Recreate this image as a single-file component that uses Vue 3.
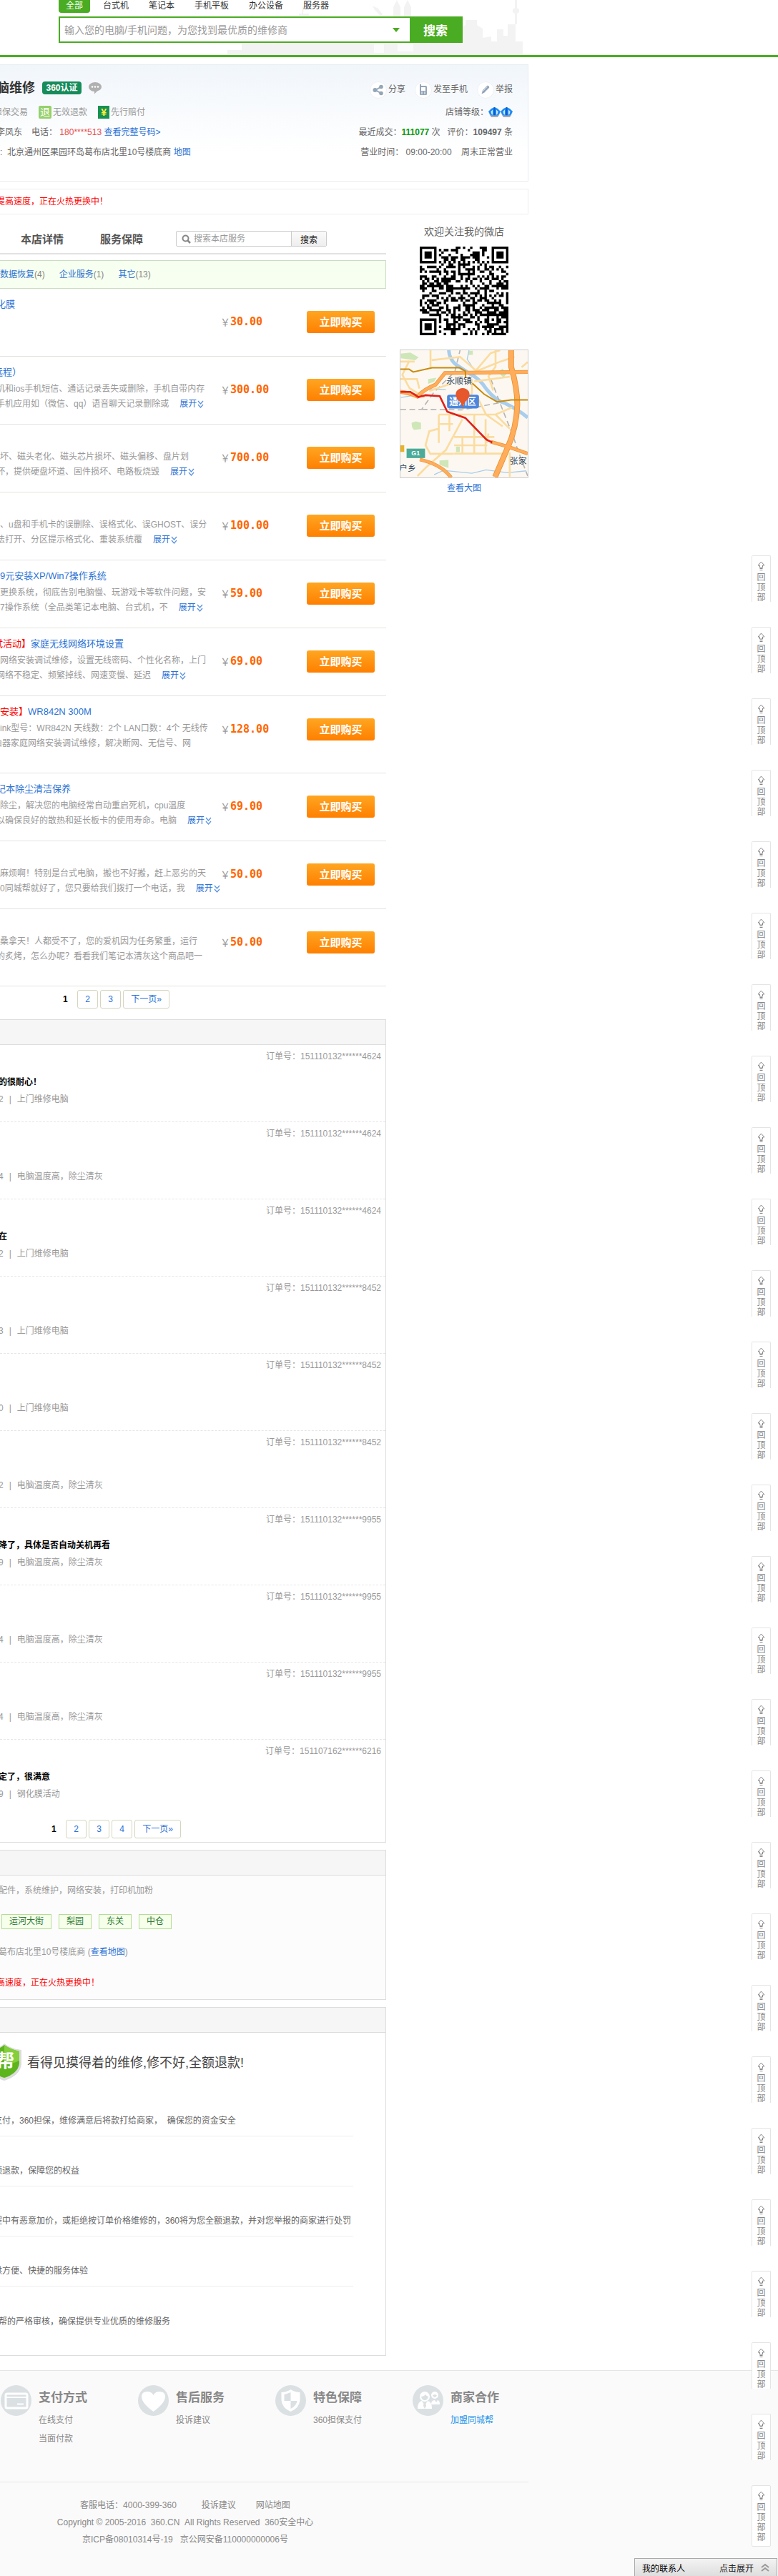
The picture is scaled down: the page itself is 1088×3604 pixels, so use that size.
<script setup>
const navTabs = ['全部', '台式机', '笔记本', '手机平板', '办公设备', '服务器']

const categories = [
  { name: '数据恢复', count: 4 },
  { name: '企业服务', count: 1 },
  { name: '其它', count: 13 },
]

const services = [
  { title: '化膜', titleCut: 'cut', lines: [], price: '30.00' },
  {
    title: '远程）', titleCut: 'cut-deep', price: '300.00', more: true,
    lines: ['机和ios手机短信、通话记录丢失或删除，手机自带内存', '手机应用如（微信、qq）语音聊天记录删除或'], cuts: ['cut', 'cut'],
  },
  {
    price: '700.00', more: true,
    lines: ['坏、磁头老化、磁头芯片损坏、磁头偏移、盘片划', '坏，提供硬盘坏道、固件损坏、电路板烧毁'], cuts: ['', 'cut'],
  },
  {
    price: '100.00', more: true,
    lines: ['、u盘和手机卡的误删除、误格式化、误GHOST、误分', '法打开、分区提示格式化、重装系统覆'], cuts: ['', 'cut'],
  },
  {
    title: '9元安装XP/Win7操作系统', price: '59.00', more: true,
    lines: ['更换系统，彻底告别电脑慢、玩游戏卡等软件问题，安', '7操作系统（全品类笔记本电脑、台式机，不'], cuts: ['', ''],
  },
  {
    tag: '试活动】', title: '家庭无线网络环境设置', titleCut: 'cut-deep', price: '69.00', more: true,
    lines: ['网络安装调试维修，设置无线密码、个性化名称，上门', '网络不稳定、频繁掉线、网速变慢、延迟'], cuts: ['', 'cut'],
  },
  {
    tag: '安装】', title: 'WR842N 300M', price: '128.00', tall: true,
    lines: ['ink型号：WR842N 天线数：2个 LAN口数：4个 无线传', '由器家庭网络安装调试维修，解决断网、无信号、网'], cuts: ['', 'cut-deep'],
  },
  {
    title: '记本除尘清洁保养', titleCut: 'cut', price: '69.00', more: true,
    lines: ['除尘，解决您的电脑经常自动重启死机，cpu温度', '以确保良好的散热和延长板卡的使用寿命。电脑'], cuts: ['', 'cut'],
  },
  {
    price: '50.00', more: true,
    lines: ['麻烦啊！特别是台式电脑，搬也不好搬，赶上恶劣的天', '0同城帮就好了，您只要给我们拨打一个电话，我'], cuts: ['', ''],
  },
  {
    price: '50.00', tall: true,
    lines: ['桑拿天！人都受不了，您的爱机因为任务繁重，运行', '的炙烤，怎么办呢？看看我们笔记本清灰这个商品吧一'], cuts: ['', 'cut'],
  },
]

const repair = '上门维修电脑'
const clean = '电脑温度高，除尘清灰'
const reviews = [
  { order: '151110132******4624', text: '的很耐心！', time: '2', service: repair },
  { order: '151110132******4624', text: '', time: '4', service: clean },
  { order: '151110132******4624', text: '在', time: '2', service: repair },
  { order: '151110132******8452', text: '', time: '3', service: repair },
  { order: '151110132******8452', text: '', time: '0', service: repair },
  { order: '151110132******8452', text: '', time: '2', service: clean },
  { order: '151110132******9955', text: '降了，具体是否自动关机再看', time: '9', service: clean },
  { order: '151110132******9955', text: '', time: '4', service: clean },
  { order: '151110132******9955', text: '', time: '4', service: clean },
  { order: '151107162******6216', text: '定了，很满意', time: '9', service: '钢化膜活动' },
]

const areas = ['运河大街', '梨园', '东关', '中仓']

const promises = [
  '支付，360担保，维修满意后将款打给商家，\u00a0 确保您的资金安全',
  '额退款，保障您的权益',
  '程中有恶意加价，或拒绝按订单价格维修的，360将为您全额退款，并对您举报的商家进行处罚',
  '供方便、快捷的服务体验',
]

const helpColumns = [
  { icon: 'card', title: '支付方式', links: ['在线支付', '当面付款'] },
  { icon: 'heart', title: '售后服务', links: ['投诉建议'] },
  { icon: 'shield', title: '特色保障', links: ['360担保支付'] },
  { icon: 'people', title: '商家合作', links: ['加盟同城帮'], accent: true },
]

const railCount = 28

const QR = 37
function inFinder(x, y) {
  const corners = [[0, 0], [QR - 7, 0], [0, QR - 7]]
  for (const [cx, cy] of corners) {
    if (x >= cx - 1 && x <= cx + 7 && y >= cy - 1 && y <= cy + 7) {
      const d = Math.max(Math.abs(x - cx - 3), Math.abs(y - cy - 3))
      return d === 3 || d <= 1 ? 1 : 0
    }
  }
  const a = Math.max(Math.abs(x - 30), Math.abs(y - 30))
  if (a <= 2) return a === 1 ? 0 : 1
  if (x === 6 || y === 6) return (x + y) % 2 ? 0 : 1
  return -1
}
let seed = 20160
let qrPath = ''
for (let y = 0; y < QR; y++) {
  for (let x = 0; x < QR; x++) {
    seed = (seed * 1103515245 + 12345) % 2147483648
    const fixed = inFinder(x, y)
    const on = fixed === -1 ? seed / 2147483648 < 0.5 : fixed === 1
    if (on) qrPath += `M${x} ${y}h1v1h-1z`
  }
}
</script>

<template>
  <div class="page">
    <header class="top">
      <svg class="skyline" viewBox="0 0 420 77" aria-hidden="true">
        <g fill="#f3f3f3">
          <path d="M20 60h310v17H20zM0 70h40v7H0z" />
          <path d="M232 23V10l3-6 2-4 2 4 3 6v13zM247 23V10l3-6 2-4 2 4 3 6v13z" />
          <path d="M100 22h14v-3h-8l1-10h-2l-1 10h-4zM203 8l8 4 6 8-3 2-8-8z" />
          <path d="M327 77V38l6-3v-7h16v7l8 5v37zM357 77V53l12-2v26zM369 77V58h8V41h9v36zM386 77V50h6V34h11v24h10v19z" />
          <path d="M402 34V19l-3-2v-4l3-2V0h3v11l3 2v4l-3 2v15z" />
        </g>
        <path d="M205 62h14v12h-14zM238 60h22v12h-22z" fill="#fbfbfb" />
      </svg>
      <nav class="top-tabs">
        <a v-for="(tab, i) in navTabs" :key="tab" href="#" :class="{ on: i === 0 }">{{ tab }}</a>
      </nav>
      <form class="top-search" @submit.prevent>
        <input type="text" aria-label="搜索问题" placeholder="输入您的电脑/手机问题，为您找到最优质的维修商">
        <svg class="caret" viewBox="0 0 10 6" width="10" height="6" aria-hidden="true"><path d="M0 0h10L5 6z" fill="#4aac22" /></svg>
        <button type="submit">搜索</button>
      </form>
    </header>

    <div class="container">
      <section class="shop">
        <div class="shop-row first">
          <div class="left">
            <h1 class="cut">脑维修</h1>
            <span class="cert">360认证</span>
            <svg class="bubble" viewBox="0 0 18 17" width="18" height="17" aria-hidden="true">
              <path d="M9 0c5 0 9 3 9 6.500 0 3-2.500 5-6 6L8 16.500 8 13C3.500 13 0 10 0 6.500S4 0 9 0z" fill="#b0b0b0" />
              <g fill="#fff"><circle cx="5" cy="6.500" r="1.300" /><circle cx="9" cy="6.500" r="1.300" /><circle cx="13" cy="6.500" r="1.300" /></g>
            </svg>
          </div>
          <div class="right tools">
            <a href="#">
              <svg viewBox="0 0 24 24" width="24" height="24" aria-hidden="true">
                <circle cx="12" cy="12" r="11.500" fill="#fff" stroke="#eef1f4" />
                <path d="M16 7.500L8 12l8 4.500" fill="none" stroke="#94a5b8" stroke-width="2" />
                <g fill="#94a5b8"><circle cx="16" cy="7.500" r="2.800" /><circle cx="7.500" cy="12" r="3" /><circle cx="16" cy="16.500" r="2.800" /></g>
              </svg>分享</a>
            <a href="#">
              <svg viewBox="0 0 24 24" width="24" height="24" aria-hidden="true">
                <circle cx="12" cy="12" r="11.500" fill="#fff" stroke="#eef1f4" />
                <path d="M8 4v4" stroke="#94a5b8" stroke-width="2" />
                <rect x="7" y="6" width="10" height="13" rx="1.500" fill="#94a5b8" />
                <path d="M9 8h6v5H9z" fill="#fff" />
                <path d="M9 15h2m2 0h2m-6 2h2m2 0h2" stroke="#fff" stroke-width="1" />
              </svg>发至手机</a>
            <a href="#">
              <svg viewBox="0 0 24 24" width="24" height="24" aria-hidden="true">
                <circle cx="12" cy="12" r="11.500" fill="#fff" stroke="#eef1f4" />
                <path d="M6.500 17.500l1.500-5 6-6.500c1.500-1 4 1 3 3l-6.500 6.500z" fill="#94a5b8" />
                <path d="M9 13l5.500-6M11 15l6-6" stroke="#dce3ea" stroke-width="1" />
              </svg>举报</a>
          </div>
        </div>
        <div class="shop-row">
          <div class="left marks">
            <span class="cut-deep">担保交易</span>
            <span class="mark"><i class="badge back">退</i>无效退款</span>
            <span class="mark"><i class="badge yen">¥</i>先行赔付</span>
          </div>
          <div class="right">店铺等级：
            <svg viewBox="0 0 34 16" width="34" height="16" aria-hidden="true">
              <g v-for="n in 2" :key="n" :transform="`translate(${(n - 1) * 17} 0)`">
                <path d="M0 7l4-4 4.500-2L13 3l4 4-3 6-5.500 2L3 13z" fill="#1d8cf5" />
                <path d="M3.500 7L6 4.500v7L4.500 11zM13.500 7L11 4.500v7l1.500-.5z" fill="#cfe8ff" />
                <path d="M7.500 1h2v12h-2z" fill="#0b5fcf" />
                <path d="M1 10l3 5h9l3-5-3 2.500H4z" fill="#a3a9b0" />
              </g>
            </svg>
          </div>
        </div>
        <div class="shop-row">
          <div class="left">
            <span class="cut">李凤东</span>
            <span class="phone">电话： <b>180****513</b> <a href="#">查看完整号码&gt;</a></span>
          </div>
          <div class="right">最近成交：<strong class="deal">111077</strong>&nbsp;次 &nbsp;&nbsp;评价：<strong>109497</strong>&nbsp;条</div>
        </div>
        <div class="shop-row">
          <div class="left"><span>:&nbsp; 北京通州区果园环岛葛布店北里10号楼底商 <a href="#">地图</a></span></div>
          <div class="right">营业时间： 09:00-20:00 &nbsp;&nbsp; 周末正常营业</div>
        </div>
      </section>

      <p class="notice"><span class="cut">提高速度，正在火热更换中！</span></p>

      <div class="columns">
        <main>
          <div class="section-tabs">
            <nav>
              <a href="#">本店详情</a>
              <a href="#">服务保障</a>
            </nav>
            <form class="shop-search" @submit.prevent>
              <svg viewBox="0 0 13 13" width="13" height="13" aria-hidden="true">
                <circle cx="5.500" cy="5.500" r="4" fill="none" stroke="#888" stroke-width="2" />
                <path d="M8.500 8.500l3.500 3.500" stroke="#888" stroke-width="2.500" />
              </svg>
              <input type="text" aria-label="搜索本店" placeholder="搜索本店服务">
              <button type="submit">搜索</button>
            </form>
          </div>

          <div class="cats">
            <span v-for="c in categories" :key="c.name"><a href="#">{{ c.name }}</a>({{ c.count }})</span>
          </div>

          <ul class="services">
            <li v-for="(s, i) in services" :key="i" :class="{ tall: s.tall }">
              <div class="desc">
                <h3><span :class="s.titleCut"><em v-if="s.tag">{{ s.tag }}</em><a v-if="s.title" href="#">{{ s.title }}</a></span></h3>
                <p v-for="(line, n) in s.lines" :key="n">
                  <span :class="s.cuts[n]">{{ line }}</span>
                  <a v-if="s.more && n === 1" class="more" href="#">展开<svg viewBox="0 0 9 11" width="9" height="11" aria-hidden="true"><path d="M1 1l3.500 4L8 1M1 6l3.500 4L8 6" fill="none" stroke="#5b93e0" stroke-width="1.300" /></svg></a>
                </p>
              </div>
              <div class="price"><i>￥</i>{{ s.price }}</div>
              <button type="button" class="buy">立即购买</button>
            </li>
          </ul>

          <nav class="pager">
            <b>1</b><a href="#">2</a><a href="#">3</a><a href="#" class="next">下一页»</a>
          </nav>

          <section class="panel">
            <div class="panel-head"></div>
            <ul class="reviews">
              <li v-for="(r, i) in reviews" :key="i">
                <p class="order">订单号：{{ r.order }}</p>
                <p class="words">{{ r.text }}</p>
                <p class="meta">{{ r.time }}<i>|</i>{{ r.service }}</p>
              </li>
            </ul>
            <nav class="pager inner">
              <b>1</b><a href="#">2</a><a href="#">3</a><a href="#">4</a><a href="#" class="next">下一页»</a>
            </nav>
          </section>

          <section class="panel">
            <div class="panel-head"></div>
            <div class="about">
              <p><span class="cut-slight">配件，系统维护，网络安装，打印机加粉</span></p>
              <p class="areas"><span v-for="a in areas" :key="a">{{ a }}</span></p>
              <p><span class="cut-slight">葛布店北里10号楼底商 (<a href="#">查看地图</a>)</span></p>
              <p class="hot"><span class="cut">高速度，正在火热更换中！</span></p>
            </div>
          </section>

          <section class="panel">
            <div class="panel-head"></div>
            <div class="slogan">
              <svg viewBox="0 0 30 52" width="30" height="52" aria-hidden="true">
                <path d="M-18 9Q0 7 6 0q8 7 24 9v20q-2 16-24 23Q-16 45-18 29z" fill="#dcdcdc" />
                <path d="M-16 10Q0 8 6 2q8 6 21 9v17q-2 14-21 20Q-14 42-16 28z" fill="#5cb51c" />
                <path d="M6 2q8 6 21 9v13Q14 30 6 28z" fill="#83cf3c" />
                <text x="-5" y="33" font-size="25" font-weight="bold" fill="#fff">帮</text>
              </svg>
              <h2>看得见摸得着的维修,修不好,全额退款!</h2>
            </div>
            <ul class="promises">
              <li v-for="p in promises" :key="p"><span class="cut-deep">{{ p }}</span></li>
              <li><span class="cut-slight">帮的严格审核，确保提供专业优质的维修服务</span></li>
            </ul>
          </section>
        </main>

        <aside>
          <p class="follow">欢迎关注我的微店</p>
          <svg class="qr" viewBox="0 0 37 37" width="124" height="124" role="img" aria-label="微店二维码">
            <path :d="qrPath" fill="#000" />
          </svg>
          <svg class="map" viewBox="28 568 538 538" role="img" aria-label="地图">
            <path d="M28 568h538v538H28z" fill="#fcf8f1" />
            <g fill="#cfe6b8">
              <path d="M30 582l40-4 35 20-15 12-60-8zM75 875l18-6 22 6v26l-30 4-8-12zM193 1034l38-2v34l-38-14zM145 690l35-6-10 18-25 8zM263 975h16v24h-16zM440 660l20-14 16 22-12 16zM320 570h14v18h-20z" />
            </g>
            <g fill="none" stroke="#a9cdec">
              <path d="M232 568q4 40 30 60l60 40q40 20 70 65 40 50 80 60 60 30 94 60" stroke-width="15" />
              <path d="M318 568l-8 38 30 45 20 4M30 768l60-10 60-26 70 2M170 1094l40-18 120 12 60-14 90 12 80-8" stroke-width="4" />
            </g>
            <g fill="none" stroke="#b5b5b5" stroke-width="5" stroke-dasharray="24 14">
              <path d="M28 818h90l50-70 90-90 22-90M118 818l170 2 160-30M410 690l50 130 44 110 20 60 42 110" />
            </g>
            <g fill="none" stroke="#fbdca0" stroke-width="8">
              <path d="M155 568v78M66 612l-30 60 30 56 64 40M28 616h60M28 690h70l10 40M160 610l120-14 70 60 100-40 60-20M350 650l60-70 40-12M430 568v70l-30 40 20 60M540 640l26-22M340 700l150-20M150 740l90-30M190 840h240l70-30M190 840v120M235 840v70M190 880h60M290 860l-70 130-80 70-40 40M255 935h170M290 935v70M340 840v165M388 860v145M255 970h140M255 1005h210l40-60M190 900l-40 10-16 60 20 36h100M350 760l40 80 70 50M430 840l60 60M400 920l-8 40M330 690v60l-40 70M490 1000v104" />
            </g>
            <g fill="none" stroke="#e8912d">
              <path d="M496 568v70q26 90 26 160-4 100-40 180l-54 126" stroke-width="24" />
              <path d="M566 660l-350 4-40 50q-50 20-76 50-40-18-72-20" stroke-width="16" />
              <path d="M110 1030q90 20 132 76M410 955l70 20 86 30" stroke-width="15" />
            </g>
            <g fill="none" stroke="#ffac5b">
              <path d="M496 568v70q26 90 26 160-4 100-40 180l-54 126" stroke-width="19" />
              <path d="M566 660l-350 4-40 50q-50 20-76 50-40-18-72-20" stroke-width="12" />
              <path d="M110 1030q90 20 132 76M410 955l70 20 86 30" stroke-width="11" />
            </g>
            <path d="M28 648h36l18 12 80-18h116l24 14 2 30M332 708l50 46 54 32 60-8h70" fill="none" stroke="#c98a0c" stroke-width="6" />
            <path d="M28 744h42l34 22 30-8 60 4 32 66 76 26 90 92 24 12" fill="none" stroke="#df1f1c" stroke-width="8" />
            <path d="M54 984h78v40H54z" fill="#4bab98" />
            <path d="M28 970h16v28H28z" fill="#e8b32c" />
            <rect x="225" y="756" width="135" height="58" rx="10" fill="#4b86dd" />
            <g fill="#33475e" font-size="36">
              <text x="222" y="710">永顺镇</text>
              <text x="490" y="1050">张家</text>
              <text x="22" y="1080">户乡</text>
            </g>
            <text x="74" y="1013" font-size="27" font-weight="bold" fill="#fff">G1</text>
            <text x="234" y="799" font-size="38" font-weight="bold" fill="#fff">通州区</text>
            <path d="M291 812q-4-22-22-36-12-20-4-34 10-14 26-14t26 14q8 16-4 34-18 14-22 36z" fill="#e6572b" />
          </svg>
          <a class="bigmap" href="#">查看大图</a>
        </aside>
      </div>
    </div>

    <footer>
      <div class="help">
        <div v-for="h in helpColumns" :key="h.title" class="help-col">
          <svg viewBox="0 0 43 43" width="43" height="43" aria-hidden="true">
            <circle cx="21.500" cy="21.500" r="21.500" fill="#dbe0e3" />
            <g v-if="h.icon === 'card'">
              <rect x="7" y="12" width="30" height="20" rx="2" fill="none" stroke="#fff" stroke-width="3" />
              <path d="M7 17h30M23 26.500h9" stroke="#fff" stroke-width="2" />
            </g>
            <path v-else-if="h.icon === 'heart'" d="M21.500 37Q5 25 5 16q0-7 8-7 6 0 8.500 5Q24 9 30 9q8 0 8 7 0 9-16.500 21z" fill="#fff" />
            <g v-else-if="h.icon === 'shield'">
              <path d="M21.500 6q6 4 13 4v11q-1 11-13 16-12-5-13-16V10q7 0 13-4z" fill="#fff" />
              <path d="M21.500 10q-5 2-9 3v9h9zM21.500 22v11q8-4 9-11z" fill="#dbe0e3" />
            </g>
            <g v-else fill="#fff">
              <path d="M26 27q0-6 5-6l2 3 2-3q3 0 3 6zM7 33q0-10 6-11l4 6 4-6q6 1 6 11z" />
              <circle cx="31" cy="14" r="5" /><circle cx="17" cy="16" r="7" />
              <path d="M12 16q4 0 6-3 2 3 4 3-1 5-5 5t-5-5zM28 14l3-1 3 1q-1 3-3 3t-3-3zM16 23h2l1 6-2 4-2-4z" fill="#dbe0e3" />
            </g>
          </svg>
          <div>
            <h4>{{ h.title }}</h4>
            <a v-for="l in h.links" :key="l" href="#" :class="{ accent: h.accent }">{{ l }}</a>
          </div>
        </div>
      </div>
      <div class="legal">
        <p><span>客服电话：4000-399-360</span><a href="#">投诉建议</a><a href="#">网站地图</a></p>
        <p>Copyright © 2005-2016 &nbsp;360.CN &nbsp;All Rights Reserved &nbsp;360安全中心</p>
        <p>京ICP备08010314号-19 &nbsp; 京公网安备110000000006号</p>
      </div>
    </footer>

    <div class="rail">
      <a v-for="n in railCount" :key="n" href="#" :class="{ last: n === railCount }">
        <svg viewBox="0 0 11 13" width="11" height="13" aria-hidden="true"><path d="M5.500 1L10 6H7.500v3h-4V6H1zM3.500 10.500h4M3.500 12.500h4" fill="none" stroke="#888" /></svg>
        <span>回</span><span>顶</span><span>部</span><span v-if="n === railCount">部</span>
      </a>
    </div>
    <button type="button" class="contacts">
      <b>我的联系人</b><span>点击展开</span>
      <svg viewBox="0 0 12 12" width="12" height="12" aria-hidden="true"><path d="M1 6l5-4 5 4M1 11l5-4 5 4" fill="none" stroke="#999" stroke-width="2" /></svg>
    </button>
  </div>
</template>

<style>
body { margin: 0; background: #fff; }
</style>

<style scoped>
.page {
  position: relative;
  overflow: hidden;
  font: 12px/21px "Liberation Sans", "Noto Sans CJK SC", sans-serif;
  color: #666;
}
* { box-sizing: border-box; }
h1, h2, h3, h4, p, ul { margin: 0; padding: 0; font-weight: normal; }
ul { list-style: none; }
a { color: #2b72d5; text-decoration: none; }
i, em { font-style: normal; }
svg { display: block; flex: none; }
button, input { font-family: inherit; margin: 0; }
.cut { margin-left: -5px; }
.cut-deep { margin-left: -9px; }
.cut-slight { margin-left: -2px; }

.top { position: relative; height: 80px; padding-left: 82px; border-bottom: 3px solid #4aac22; }
.skyline { position: absolute; left: 318px; top: 0; width: 420px; height: 77px; }
.top-tabs { position: relative; display: flex; gap: 8px; height: 18px; }
.top-tabs a { padding: 0 10px; line-height: 17px; color: #333; }
.top-tabs .on { background: #4aac22; color: #fff; border-radius: 0 0 4px 4px; }
.top-search {
  position: relative; display: flex; align-items: center; width: 565px; height: 37px;
  margin-top: 5px; border: 2px solid #4aac22; background: #fff;
}
.top-search input { flex: 1; height: 33px; border: 0; padding: 0 6px; font-size: 14px; outline: 0; background: none; }
.top-search input::placeholder { color: #999; opacity: 1; }
.caret { margin-right: 14px; }
.top-search button { width: 72px; height: 33px; border: 0; background: #4aac22; color: #fff; font-size: 17px; font-weight: bold; }

.container { max-width: 739px; }
.shop {
  margin-top: 10px; padding: 17px 21px 26px 0; border: 1px solid #e6edf1; border-left: 0;
  background: linear-gradient(#f1f6fb, #fff 75%);
}
.shop-row { display: flex; justify-content: space-between; align-items: center; height: 28px; }
.shop-row.first { height: 35px; }
.left, .right { display: flex; align-items: center; white-space: nowrap; }
.first .left { align-items: center; height: 30px; margin-bottom: 5px; }
h1 { font-size: 18px; line-height: 28px; font-weight: bold; color: #333; }
.cert { margin-left: 10px; width: 55px; line-height: 18px; border-radius: 4px; background: #178c5b; color: #fff; font-weight: bold; text-align: center; }
.bubble { margin-left: 10px; }
.tools { gap: 13px; }
.tools a { display: flex; align-items: center; gap: 2px; color: #666; }
.marks { color: #999; gap: 15px; }
.mark { display: flex; align-items: center; gap: 2px; }
.badge { width: 18px; line-height: 18px; text-align: center; border-radius: 2px; color: #fff; font-size: 14px; }
.back { background: #96d06c; }
.yen { width: 16px; background: #169152; color: #ffee3c; border-radius: 0; font-weight: bold; }
.phone { margin-left: 13px; }
.phone b { font-weight: normal; color: #e84c4c; }
.deal { color: #0a9a0a; }

.notice { display: flex; margin-top: 10px; height: 36px; line-height: 34px; border: 1px solid #eee; border-left: 0; color: #f00; }

.columns { display: flex; gap: 19px; }
main { flex: 1; min-width: 0; }
aside { width: 180px; padding-top: 12px; }

.section-tabs { display: flex; align-items: center; height: 42px; margin-top: 14px; border-bottom: 2px solid #e2e2e2; }
.section-tabs nav { display: flex; gap: 51px; width: 246px; padding-left: 29px; }
.section-tabs nav a { font-size: 15px; font-weight: bold; color: #555; white-space: nowrap; }
.shop-search { display: flex; align-items: center; width: 211px; height: 22px; border: 1px solid #ccc; border-radius: 2px; padding-left: 7px; }
.shop-search input { flex: 1; min-width: 0; border: 0; padding: 0 4px; font-size: 12px; height: 20px; outline: 0; }
.shop-search input::placeholder { color: #999; opacity: 1; }
.shop-search button { width: 49px; height: 20px; padding: 0; border: 0; border-left: 1px solid #ccc; background: linear-gradient(#fafafa, #eee); font-size: 12px; color: #222; }

.cats { display: flex; gap: 20px; margin-top: 8px; height: 40px; line-height: 38px; border: 1px solid #cbdcc3; border-left: 0; background: #f7fff0; color: #888; }

.services li { display: flex; height: 95px; border-bottom: 1px solid #e3e3dd; }
.services .tall { height: 108px; }
.desc { width: 308px; padding-top: 11px; color: #999; }
.desc h3 { display: flex; height: 22px; margin-bottom: 2px; font-size: 13px; line-height: 22px; white-space: nowrap; }
.desc em { color: #f00; }
.desc p { display: flex; line-height: 21px; white-space: nowrap; }
.more { display: flex; align-items: center; margin-left: 15px; gap: 1px; }
.price { display: flex; align-items: center; width: 121px; height: 31px; margin-top: 31px; font: bold 15px/31px "DejaVu Sans Mono", monospace; color: #f60; }
.price i { width: 14px; font: 14px/31px "Noto Sans CJK SC", sans-serif; color: #999; }
.buy {
  width: 95px; height: 31px; margin-top: 31px; padding: 0 0 3px; border: 0; border-radius: 3px;
  background: linear-gradient(#ffa621, #ff7f00); color: #fff; font-size: 15px; font-weight: bold;
}

.pager { display: flex; align-items: center; gap: 3px; padding: 5px 0 0 88px; }
.pager b { width: 17px; color: #000; }
.pager a { width: 29px; line-height: 24px; border: 1px solid #d5d5bf; border-radius: 3px; text-align: center; }
.pager .next { width: 65px; }
.pager.inner { padding: 4px 0 5px 72px; }

.panel { margin-top: 15px; border: 1px solid #ddd; border-left: 0; }
.panel + .panel { margin-top: 10px; }
.panel-head { height: 35px; background: #f6f6f6; border-bottom: 1px solid #ddd; }

.reviews li { height: 108px; padding: 6px 6px 0 0; border-bottom: 1px dashed #e6e6e6; color: #999; }
.reviews li:last-child { border-bottom: 0; }
.order { text-align: right; }
.words { height: 24px; margin: 13px 0 0 -2px; line-height: 24px; color: #000; font-weight: bold; }
.meta { margin-left: -2px; line-height: 24px; }
.meta i { margin: 0 8px; }

.about { padding-bottom: 1px; background: #fcfcfc; color: #999; }
.about p { display: flex; align-items: center; height: 43px; }
.about .areas { gap: 10px; padding-left: 2px; }
.areas span { padding: 0 10px; line-height: 19px; border: 1px solid #b6dc95; background: #f5ffea; color: #2c7a35; }
.about .hot { color: #f00; }

.slogan { display: flex; align-items: center; gap: 8px; height: 75px; padding-top: 6px; }
h2 { padding-top: 3px; font-size: 18px; line-height: 27px; color: #444; }
.promises { padding-bottom: 26px; }
.promises li { display: flex; align-items: flex-end; height: 70px; width: 494px; padding-bottom: 9px; border-bottom: 1px solid #eee; line-height: 24px; white-space: nowrap; }
.promises li:last-child { border-bottom: 0; }

.follow { line-height: 24px; font-size: 14px; text-align: center; }
.qr { margin: 9px auto 20px; }
.map { width: 180px; height: 180px; border: 1px solid #ccc; }
.bigmap { display: block; line-height: 28px; text-align: center; }

footer { margin-top: 20px; border-top: 1px solid #e5e5e5; background: #fafafa; color: #888; padding-bottom: 40px; }
.help { display: flex; max-width: 739px; padding: 20px 0 46px 1px; border-bottom: 1px solid #e8e8e8; }
.help-col { display: flex; gap: 10px; width: 192px; height: 89px; flex: none; }
h4 { font-size: 17px; line-height: 36px; font-weight: bold; }
.help-col a { display: block; line-height: 26px; color: #888; }
.help-col .accent { color: #1a94ec; }
.legal { max-width: 518px; padding-top: 20px; text-align: center; line-height: 24px; }
.legal p:first-child { display: flex; justify-content: center; }
.legal a { color: #888; margin-left: 28px; }
.legal span { margin-right: 7px; }

.rail { position: absolute; right: 10px; top: 777px; display: flex; flex-direction: column; gap: 35px; }
.rail a {
  display: flex; flex-direction: column; align-items: center; width: 27px; height: 65px; padding-top: 7px;
  border: 1px solid #e4e4e4; border-bottom: 0; border-radius: 2px 2px 0 0; background: #fff; color: #888; line-height: 14px;
}
.rail svg { margin-bottom: 3px; }
.rail .last { height: 86px; border-bottom: 1px solid #e4e4e4; border-radius: 2px; }
.contacts {
  position: absolute; right: 1px; bottom: 0; display: flex; align-items: center; width: 200px; height: 26px; padding: 0 10px;
  border: 1px solid #aaa; background: linear-gradient(#f3f3f3, #dedede); font-size: 12px; color: #222;
}
.contacts b { flex: 1; text-align: left; font-weight: normal; color: #000; }
.contacts span { margin-right: 10px; }
</style>
